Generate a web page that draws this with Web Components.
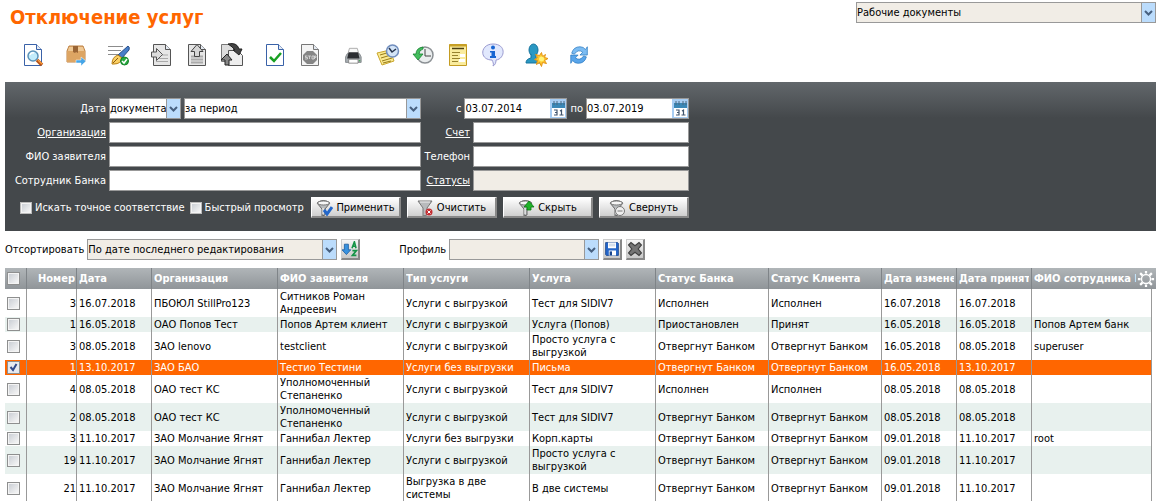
<!DOCTYPE html>
<html lang="ru">
<head>
<meta charset="utf-8">
<title>Отключение услуг</title>
<style>
body { margin: 0; background: #fff; color: #000; font: 11px/13px "DejaVu Sans Condensed", "DejaVu Sans", sans-serif; }
</style>
</head>
<body>
<services-page></services-page>

<template id="page-tpl">
  <style>
    :host { display: block; padding: 0 4px 0 5px; }
    header { display: flex; justify-content: space-between; align-items: flex-start; padding-top: 2px; height: 30px; }
    h1 { margin: 3px 0 0 5px; font-size: 20px; line-height: 24px; font-weight: bold; color: #f60; }
    .tools { display: flex; gap: 19px; padding: 11px 16px 15px; }
    .tools div { display: flex; gap: 11px; }
    .sort { display: flex; align-items: center; padding: 8px 0; gap: 4px; }
    .sort .profile { margin-left: 35px; }
  </style>
  <header>
    <h1>Отключение услуг</h1>
    <drop-down name="Раздел" value="Рабочие документы" width="300" tint></drop-down>
  </header>
  <nav class="tools" aria-label="Действия">
    <div><tool-button icon="view" name="Просмотр"></tool-button></div>
    <div><tool-button icon="box" name="Отправить"></tool-button></div>
    <div><tool-button icon="sign" name="Подписать"></tool-button></div>
    <div><tool-button icon="import" name="Импорт"></tool-button><tool-button icon="upload" name="Экспорт"></tool-button><tool-button icon="swap" name="Обмен"></tool-button></div>
    <div><tool-button icon="accept" name="Принять"></tool-button><tool-button icon="stop" name="Отказать"></tool-button></div>
    <div><tool-button icon="print" name="Печать"></tool-button><tool-button icon="notes" name="История заметок"></tool-button><tool-button icon="history" name="История"></tool-button><tool-button icon="list" name="Журнал"></tool-button><tool-button icon="info" name="Сведения"></tool-button></div>
    <div><tool-button icon="user" name="Пользователь"></tool-button></div>
    <div><tool-button icon="refresh" name="Обновить"></tool-button></div>
  </nav>
  <filter-panel></filter-panel>
  <div class="sort">
    <drop-down label="Отсортировать" value="По дате последнего редактирования" width="250" tint></drop-down>
    <tool-button icon="az" name="Порядок сортировки" framed></tool-button>
    <drop-down class="profile" label="Профиль" value="" width="150" tint></drop-down>
    <tool-button icon="save" name="Сохранить профиль" framed></tool-button>
    <tool-button icon="delete" name="Удалить профиль" framed></tool-button>
  </div>
  <data-grid></data-grid>
</template>

<template id="filter-tpl">
  <style>
    :host { display: block; padding: 16px 0 13px; color: #fff;
      background: linear-gradient(#62676b, #44484b 36px); }
    .fields { display: grid; grid-template-columns: 416px 268px; row-gap: 3px; }
    .dates { display: flex; justify-content: flex-end; gap: 3px; }
    .actions { display: flex; width: 684px; align-items: center; margin-top: 6px; }
    .checks { display: flex; flex: 1; gap: 5px; padding-left: 15px; }
    .buttons { display: flex; gap: 6px; }
  </style>
  <div class="fields">
    <div class="dates">
      <drop-down label="Дата" value="документа" width="72"></drop-down>
      <drop-down name="Период" value="за период" width="237"></drop-down>
    </div>
    <div class="dates">
      <date-field label="с" value="03.07.2014"></date-field>
      <date-field label="по" value="03.07.2019"></date-field>
    </div>
    <text-field label="Организация" width="312" link></text-field>
    <text-field label="Счет" width="216" link></text-field>
    <text-field label="ФИО заявителя" width="312"></text-field>
    <text-field label="Телефон" width="216"></text-field>
    <text-field label="Сотрудник Банка" width="312"></text-field>
    <text-field label="Статусы" width="216" link tint></text-field>
  </div>
  <div class="actions">
    <div class="checks">
      <check-box>Искать точное соответствие</check-box>
      <check-box>Быстрый просмотр</check-box>
    </div>
    <div class="buttons">
      <push-button icon="apply">Применить</push-button>
      <push-button icon="clear">Очистить</push-button>
      <push-button icon="hide">Скрыть</push-button>
      <push-button icon="collapse">Свернуть</push-button>
    </div>
  </div>
</template>

<script>
const sheet = (line, fill = '#fff') => `<path d="M3.5 1.5h12l5 5v16h-17z" fill="${fill}" stroke="${line}"/><path d="M15.5 1.5v5h5" fill="#e4eaf2" stroke="${line}"/>`;
const funnel = '<path d="M1 4q6-5 13 0l-5 6v6l-3 1v-7z" fill="#b9bcbe" stroke="#666"/><ellipse cx="7.5" cy="4" rx="6" ry="2" fill="#f6f6f6" stroke="#777"/><path d="M7 9v6" stroke="#fff"/>';
const icons = {
  view: sheet('#3a62a8') + '<circle cx="12" cy="13" r="5" fill="#c3ecfb" stroke="#5b92b8" stroke-width="1.5"/><path d="M9 12q1-3 4-2" stroke="#fff" stroke-width="1.5" fill="none"/><path d="M16 17l5 5" stroke="#b65317" stroke-width="3.5"/><path d="M17 17l4 4" stroke="#fb9b3a" stroke-width="1.5"/>',
  box: '<path d="M3 8l2-5h14l2 5v11H3z" fill="#e5b276" stroke="#bd8042"/><path d="M3 8h18v11H3z" fill="#dda563"/><path d="M5 4h14l1 4H4z" fill="#efc995"/><path d="M9 3h5v7l-2-1-1 1-2-1z" fill="#9a6535"/><path d="M12 17h5v-3l5 4-5 5v-3h-5z" fill="#45a5e8" stroke="#fff" stroke-width=".5"/>',
  sign: '<path d="M1 3.5h15M1 7.5h13M1 11.5h10" stroke="#8c8c8c"/><path d="M21 3q2 1 1 4l-7 8-4-3z" fill="#477ec9" stroke="#294d87"/><path d="M11 12l4 3q-1 6-8 6H5q0-7 6-9" fill="#fbd065" stroke="#b77e12"/><path d="M6 20l5-5" stroke="#8a5b10"/><circle cx="17.5" cy="18" r="4" fill="#28a940" stroke="#128226"/><path d="M15 18l2 2 3-4" fill="none" stroke="#fff" stroke-width="1.5"/>',
  import: sheet('#555', '#e6e6e6') + '<path d="M6 12h12M6 15.5h12M6 18.500h12" stroke="#aaa"/><path d="M1.5 9h5V5.500l6 6-6 6V14h-5z" fill="#ddd" stroke="#555"/>',
  upload: sheet('#555', '#e6e6e6') + '<path d="M6 13.500h12M6 16.500h12M6 19.500h12" stroke="#aaa" stroke-width="2"/><path d="M9.5 13.500V8.500H6l6-7 6 7h-3.500v5z" fill="#d6d6d6" stroke="#444"/>',
  swap: '<path d="M1.500 1.500h8l4 4v13h-12z" fill="#ddd" stroke="#777"/><path d="M8.500 7.500h9l5 5v10h-14z" fill="#eee" stroke="#555"/><path d="M8 1q9-2 11 5h3l-3 6-6-5h2Q13 4 8 1" fill="#444" stroke="#222"/><path d="M9 22H5v-5H1l6-6 5 6H9z" fill="#888" stroke="#222"/>',
  accept: sheet('#3a62a8') + '<path d="M7 14l4 4 7-8" fill="none" stroke="#18a022" stroke-width="2.500"/>',
  stop: sheet('#777', '#f4f4f4') + '<path d="M9 8h6l4 4v5l-4 4H9l-4-4v-5z" fill="#858585"/><path d="M7 13h2.500M7.500 13v1.500h2V16H7M10 13h3M11.500 13v3M14 13h2v3h-2zM16.500 16v-3h1.500v1.500h-1" fill="none" stroke="#ddd" stroke-width=".8"/>',
  print: '<g transform="translate(3 3) scale(.78)"><path d="M7 3h10l2 7H5z" fill="#f7f7f7" stroke="#999"/><path d="M4 10h16l2 4v7H2v-7z" fill="#a7adb1" stroke="#777c80"/><path d="M6 8h12l2 8H4z" fill="#2b2d31"/><path d="M6 17h12v5H6z" fill="#fff" stroke="#777"/><circle cx="20" cy="19" r="1" fill="#48a653"/></g>',
  notes: '<path d="M1 10l13-3 4 11-12 4z" fill="#fae990" stroke="#caa72e"/><path d="M4 12l10-3M5 15l10-3M6 18l10-3M7 20l8-2" stroke="#977b19"/><circle cx="16.500" cy="8" r="6" fill="#d3e4f7" stroke="#708dbd" stroke-width="1.500"/><path d="M13 5l3 4 4-3" stroke="#26354e" stroke-width="1.500" fill="none"/>',
  history: '<circle cx="14" cy="12" r="8" fill="#eaedee" stroke="#8b9094" stroke-width="1.500"/><path d="M14 6v7h6" fill="none" stroke="#444"/><path d="M12 4Q5 5 5 11H2l5 6 5-6H8q0-4 4-5z" fill="#43bd5d" stroke="#168331" stroke-width=".8"/>',
  list: '<path d="M3.500 1.500h17v21h-17z" fill="#faec9d" stroke="#c49c22"/><path d="M3.500 2.500h17" stroke="#c8a126" stroke-width="2"/><path d="M6 5.500h12" stroke="#4d4011" stroke-width="1.500"/><path d="M6 9.500h8M6 12.500h6M6 15.500h8M6 18.500h6" stroke="#97822e"/><path d="M14 11h5v3h-5zM13 16h6v3h-6z" fill="#fff"/>',
  info: '<path d="M12 1c14 0 12 15 3 16 0 3-1 5-3 6 1-2 0-4-1-6C-2 17-1 1 12 1z" fill="#e1e8fd" stroke="#9a9ad0"/><circle cx="12" cy="4.500" r="2" fill="#1765d2"/><path d="M9 8h5v5h1v2H9v-2h1.500V9.500H9z" fill="#1765d2"/>',
  user: '<ellipse cx="9.500" cy="7" rx="4.500" ry="6" fill="#2a98c3" stroke="#14739d"/><path d="M7 11v4q-5 1-5 5h15q0-4-5-5v-4" fill="#2a98c3" stroke="#14739d"/><path d="M17.500 9.500l1 4 3-2-1 3 3.500 1-3.500 2 2 3-4-1-1 4-2-4-3 2 1-4-3-1 3-2-2-3 4 1z" fill="#ffc72b" stroke="#e49516"/><circle cx="17.500" cy="16" r="2.500" fill="#fff378"/>',
  refresh: '<g transform="translate(1 1) scale(.92)"><path d="M4 10q2-7 9-7 4 0 6 3l2-3v9h-8l3-3q-5-4-9 2z" fill="#7cbcf2" stroke="#2c7bc2" stroke-width=".8"/><path d="M20 14q-2 7-9 7-4 0-6-3l-2 3v-9h8l-3 3q5 4 9-2z" fill="#59a5ea" stroke="#2c7bc2" stroke-width=".8"/></g>',
  az: '<path d="M3 4h5v7h3l-5.500 6L0 11h3z" fill="#3892df" stroke="#1b5ca0"/><path d="M12.500 9l3-8 2 8M13.500 6.500h4M13 12h5l-5 6h5" fill="none" stroke="#159447" stroke-width="2"/>',
  save: '<path d="M2 2h15l1 1v15H3l-1-1z" fill="#2566c9" stroke="#17448c"/><path d="M5 2h10v7H5zM6 12h9v6H6z" fill="#fff"/><path d="M6 4h8M6 6h8" stroke="#b4c5dd"/><path d="M7 13h3v5H7z" fill="#17448c"/>',
  delete: '<path d="M2 5l3-3 5 4 5-4 3 3-4 5 4 5-3 3-5-4-5 4-3-3 4-5z" fill="#747474" stroke="#404040" stroke-width="1.500"/>',
  apply: funnel + '<path d="M8 11l3 4 5-7" fill="none" stroke="#2467c9" stroke-width="3"/>',
  clear: '<path d="M1 2h14l-5 7v7l-4 1V9z" fill="#b8babc" stroke="#777"/><path d="M3 3h10" stroke="#eee"/><circle cx="12" cy="13" r="3.500" fill="#c42e32"/><path d="M10.500 11.500l3 3m0-3l-3 3" stroke="#fff"/>',
  hide: funnel + '<path d="M9 11V8H6l5-6 5 6h-3v3z" fill="#20b32a" stroke="#087610" stroke-width=".8"/>',
  collapse: funnel + '<circle cx="11" cy="12" r="4.500" fill="#eee" stroke="#777"/><path d="M8.500 12h5" stroke="#777"/>',
  gear: '<path d="M10 1v3M10 16v3M1 10h3M16 10h3M3.500 3.500l2.500 2.500M14 14l2.500 2.500M3.500 16.500l2.500-2.500M14 6l2.500-2.500" stroke="#fff" stroke-width="2.500"/><circle cx="10" cy="10" r="5" fill="none" stroke="#fff" stroke-width="1.500"/>',
  calendar: '<path d="M0 0h16v19H0z" fill="#a7cdf3"/><path d="M2 4h13v5H2z" fill="#3a87b6"/><path d="M4 2v4M7 2v4M11 2v4M14 2v4" stroke="#4a6980"/><path d="M2 9h13v9H2z" fill="#fff"/><path d="M4 11h3v5H4M5 13.500h2M10 12l1.500-1v5.500M9.500 16h4" fill="none" stroke="#40556e" stroke-width="1.200"/>'
};
const svg = (name, w, h = w, vw = w, vh = h) =>
  `<svg width="${w}" height="${h}" viewBox="0 0 ${vw} ${vh}" fill="none" aria-hidden="true">${icons[name]}</svg>`;

const boxCss = `
  .check { appearance: none; box-sizing: border-box; width: 13px; height: 13px; margin: 0; flex: none; display: block;
    border: 1px solid #8e8f8f; background: linear-gradient(135deg, #cbcfd5, #f6f6f6) content-box, #f4f4f4; padding: 1px; }
  .check:checked { background: url("data:image/svg+xml,%3Csvg xmlns='http://www.w3.org/2000/svg' viewBox='0 0 11 11'%3E%3Cpath d='M2.500 5l2.500 3 3.500-6' fill='none' stroke='%23304a8c' stroke-width='2'/%3E%3C/svg%3E") padding-box, #e6e9f0; }`;
const fieldCss = `
  :host { display: flex; align-items: center; justify-content: flex-end; gap: 3px; }
  input, select { box-sizing: border-box; height: 21px; margin: 0; border: 1px solid #999; border-radius: 0; outline: none;
    background: #fff; color: #000; font: inherit; padding: 0; appearance: none; }
  .tint { background: #f1ede6; }
  .wrap { display: grid; }
  .wrap > * { grid-area: 1 / 1; }
  .wrap > svg, .wrap > i { justify-self: end; align-self: center; margin-right: 1px; pointer-events: none; }`;

class Base extends HTMLElement {
  attr(name, fallback = '') { return this.getAttribute(name) ?? fallback; }
  connectedCallback() {
    if (this.shadowRoot) return;
    this.attachShadow({ mode: 'open' }).innerHTML = this.render();
  }
}
const fromTemplate = id => class extends HTMLElement {
  connectedCallback() {
    if (!this.shadowRoot) this.attachShadow({ mode: 'open' }).append(document.getElementById(id).content.cloneNode(true));
  }
};

customElements.define('drop-down', class extends Base {
  render() {
    const label = this.attr('label');
    return `<style>${fieldCss}
      select { width: ${this.attr('width')}px; max-width: 100%; padding-right: 14px; }
      .wrap i { width: 13px; height: 19px; border-left: 1px solid #999; background: #bbdcfc; display: grid; place-items: center; }
    </style>
    ${label ? `<label for="s">${label}</label>` : ''}
    <span class="wrap"><select id="s" class="${this.hasAttribute('tint') ? 'tint' : ''}" aria-label="${label || this.attr('name')}"><option>${this.attr('value')}</option></select>
    <i><svg width="9" height="6" viewBox="0 0 9 6"><path d="M1 1l3.5 3.5L8 1" fill="none" stroke="#47607f" stroke-width="2"/></svg></i></span>`;
  }
});

customElements.define('text-field', class extends Base {
  render() {
    const link = this.hasAttribute('link');
    return `<style>${fieldCss}
      input { width: ${this.attr('width')}px; }
      a { color: inherit; text-decoration: underline; }
    </style>
    <label for="t">${link ? `<a href="#">${this.attr('label')}</a>` : this.attr('label')}</label>
    <input id="t" class="${this.hasAttribute('tint') ? 'tint' : ''}">`;
  }
});

customElements.define('date-field', class extends Base {
  render() {
    return `<style>${fieldCss} input { width: 103px; padding-right: 17px; }</style>
    <label for="d">${this.attr('label')}</label>
    <span class="wrap"><input id="d" value="${this.attr('value')}">${svg('calendar', 16, 19)}</span>`;
  }
});

customElements.define('check-box', class extends Base {
  render() {
    return `<style>:host { display: block; } label { display: flex; align-items: center; gap: 3px; white-space: nowrap; } ${boxCss}
      .check { width: 12px; height: 12px; border-color: #bbb; }</style>
    <label><input type="checkbox" class="check"><slot></slot></label>`;
  }
});

customElements.define('push-button', class extends Base {
  render() {
    return `<style>:host { display: block; }
      button { width: 90px; height: 21px; box-sizing: border-box; padding: 0; display: flex; align-items: center; justify-content: center; gap: 3px;
        font: inherit; color: #000; border: 1px solid #fff; border-right: 2px solid #888; border-bottom: 2px solid #888; background: linear-gradient(#fff, #cfcfcf); }
    </style><button type="button">${svg(this.attr('icon'), 17)}<slot></slot></button>`;
  }
});

customElements.define('tool-button', class extends Base {
  render() {
    const framed = this.hasAttribute('framed');
    return `<style>:host { display: block; }
      button { display: grid; place-items: center; padding: 0; border: 0; background: none; width: 24px; height: 24px; }
      .framed { box-sizing: border-box; width: 19px; height: 21px; border: 1px solid #ccc; border-right: 2px solid #888; border-bottom: 2px solid #888; background: linear-gradient(#f6f6f6, #c8c8c8); }
    </style><button type="button" class="${framed ? 'framed' : ''}" aria-label="${this.attr('name')}">${framed ? svg(this.attr('icon'), 16, 16, 20, 20) : svg(this.attr('icon'), 24)}</button>`;
  }
});

const columns = [['', 22], ['Номер', 50], ['Дата', 75], ['Организация', 126], ['ФИО заявителя', 126], ['Тип услуги', 126], ['Услуга', 126],
  ['Статус Банка', 113], ['Статус Клиента', 113], ['Дата изменения', 75], ['Дата принятия', 75], ['ФИО сотрудника Банка', 0]];
const rows = [
  ['3', '16.07.2018', 'ПБОЮЛ StillPro123', 'Ситников Роман Андреевич', 'Услуги с выгрузкой', 'Тест для SIDIV7', 'Исполнен', 'Исполнен', '16.07.2018', '16.07.2018', ''],
  ['1', '16.05.2018', 'ОАО Попов Тест', 'Попов Артем клиент', 'Услуги с выгрузкой', 'Услуга (Попов)', 'Приостановлен', 'Принят', '16.05.2018', '16.05.2018', 'Попов Артем банк'],
  ['3', '08.05.2018', 'ЗАО lenovo', 'testclient', 'Услуги с выгрузкой', 'Просто услуга с выгрузкой', 'Отвергнут Банком', 'Отвергнут Банком', '16.05.2018', '08.05.2018', 'superuser'],
  ['1', '13.10.2017', 'ЗАО БАО', 'Тестио Тестини', 'Услуги без выгрузки', 'Письма', 'Отвергнут Банком', 'Отвергнут Банком', '16.05.2018', '13.10.2017', ''],
  ['4', '08.05.2018', 'ОАО тест КС', 'Уполномоченный Степаненко', 'Услуги с выгрузкой', 'Тест для SIDIV7', 'Исполнен', 'Исполнен', '08.05.2018', '08.05.2018', ''],
  ['2', '08.05.2018', 'ОАО тест КС', 'Уполномоченный Степаненко', 'Услуги с выгрузкой', 'Тест для SIDIV7', 'Отвергнут Банком', 'Отвергнут Банком', '08.05.2018', '08.05.2018', ''],
  ['3', '11.10.2017', 'ЗАО Молчание Ягнят', 'Ганнибал Лектер', 'Услуги без выгрузки', 'Корп.карты', 'Отвергнут Банком', 'Отвергнут Банком', '09.01.2018', '11.10.2017', 'root'],
  ['19', '11.10.2017', 'ЗАО Молчание Ягнят', 'Ганнибал Лектер', 'Услуги с выгрузкой', 'Просто услуга с выгрузкой', 'Отвергнут Банком', 'Отвергнут Банком', '09.01.2018', '11.10.2017', ''],
  ['21', '11.10.2017', 'ЗАО Молчание Ягнят', 'Ганнибал Лектер', 'Выгрузка в две системы', 'В две системы', 'Отвергнут Банком', 'Отвергнут Банком', '09.01.2018', '11.10.2017', '']
];
const selected = 3;

customElements.define('data-grid', class extends Base {
  render() {
    return `<style>:host { display: block; position: relative; padding-right: 4px; } ${boxCss}
      table { width: 100%; table-layout: fixed; border-collapse: separate; border-spacing: 0; }
      th, td { box-sizing: border-box; border-right: 1px solid #999; padding: 1px 2px; text-align: left; vertical-align: middle; }
      th { height: 21px; color: #fff; white-space: nowrap; background: linear-gradient(#b0b5b8, #909599); border-color: #7f8488; }
      th div { overflow: hidden; }
      th:nth-child(2), td:nth-child(2) { text-align: right; padding-right: 1px; }
      td:nth-child(2) { padding-right: 0; }
      td:first-child, th:first-child { padding-top: 0; padding-bottom: 0; }
      th:last-child { border-right: 0; padding-right: 16px; }
      tbody tr:nth-child(even) { background: #e8f1ee; }
      tbody tr.selected { background: #f60; color: #fff; }
      .settings { position: absolute; top: 0; right: 0; width: 20px; height: 21px; padding: 0; border: 0; display: grid; place-items: center; background: linear-gradient(#b0b5b8, #909599); }
    </style>
    <table><colgroup>${columns.map(c => `<col${c[1] ? ` style="width:${c[1]}px"` : ''}>`).join('')}</colgroup>
    <thead><tr>${columns.map((c, i) => `<th scope="col">${i ? `<div>${c[0]}</div>` : '<input type="checkbox" class="check" aria-label="Выбрать все">'}</th>`).join('')}</tr></thead>
    <tbody>${rows.map((r, i) => `<tr class="${i === selected ? 'selected' : ''}"><td><input type="checkbox" class="check" aria-label="Выбрать строку"${i === selected ? ' checked' : ''}></td>${r.map(v => `<td>${v}</td>`).join('')}</tr>`).join('')}</tbody></table>
    <button type="button" class="settings" aria-label="Настройка столбцов">${svg('gear', 18, 18, 20, 20)}</button>`;
  }
});

customElements.define('filter-panel', fromTemplate('filter-tpl'));
customElements.define('services-page', fromTemplate('page-tpl'));
</script>
</body>
</html>
